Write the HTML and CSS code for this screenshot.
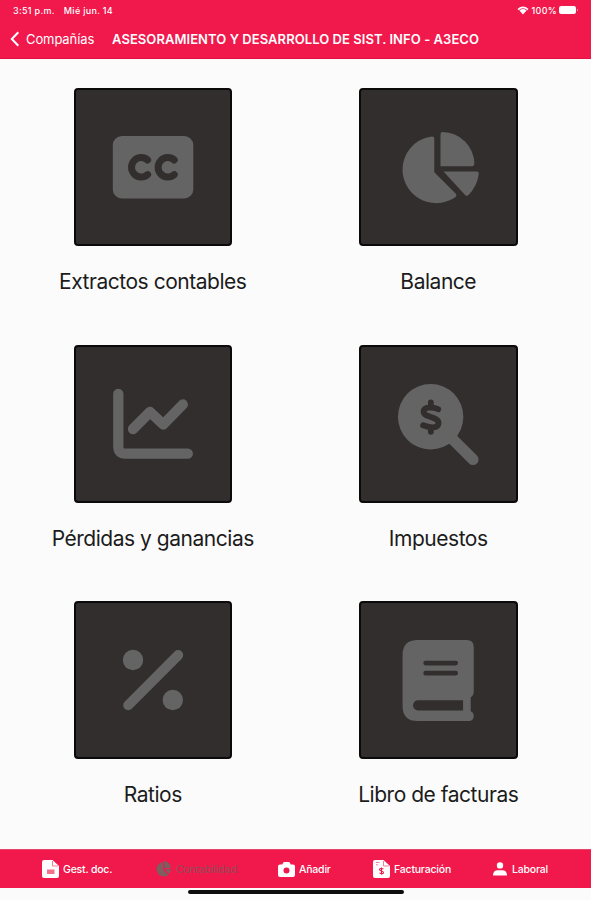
FILE: index.html
```html
<!DOCTYPE html>
<html lang="es">
<head>
    <meta charset="UTF-8">
    <meta name="viewport" content="width=device-width, initial-scale=1.0">
    <title>Contabilidad</title>
    <link rel="stylesheet" href="styles.css">
</head>
<body>
    <header class="header">
        <div class="status-bar">
            <span class="time">3:51 p.m.</span>
            <span class="date">Mié jun. 14</span>
            <svg class="wifi" viewBox="0 0 12 9">
                <path d="M1 3.6Q6-.8 11 3.6" fill="none" stroke="#fff" stroke-width="1.6"/>
                <path d="M2.4 4.4Q6 1.8 9.6 4.4L6 8.6Z" fill="#fff"/>
            </svg>
            <span class="percent">100%</span>
            <svg class="battery" viewBox="0 0 20 8">
                <rect x="0" y="0" width="17" height="8" rx="2.2" fill="#fff"/>
                <path d="M18 2.5q1.4 1.5 0 3z" fill="#fff"/>
            </svg>
        </div>
        <div class="nav-bar">
            <svg class="back-icon" viewBox="0 0 10 16">
                <path d="M8.3 1.2 1.8 8l6.5 6.8" fill="none" stroke="#fff" stroke-width="2"/>
            </svg>
            <a class="back">Compañías</a>
            <h1 class="title">ASESORAMIENTO Y DESARROLLO DE SIST. INFO - A3ECO</h1>
        </div>
    </header>

    <main class="grid">
        <div class="card">
            <div class="tile">
                <svg viewBox="2 2 154 154">
                    <rect class="fill" x="38.8" y="48" width="80.5" height="62.5" rx="9"/>
                    <path class="cut" stroke-width="7" d="M73.6 72a9.7 9.7 0 1 0 0 14.600M100.200 72a9.700 9.700 0 1 0 0 14.600"/>
                </svg>
            </div>
            <p class="label">Extractos contables</p>
        </div>
        <div class="card">
            <div class="tile">
                <svg viewBox="2 2 154 154">
                    <path class="fill" d="M72.5 48.1q2.3-.2 2.3 2v33.6l21.4 21.5q1.6 1.6-.2 3A33.3 33.3 0 1 1 72.5 48.1Z"/>
                    <path class="fill" d="M81 46q0-2.2 2.2-2.2a32 32 0 0 1 31.5 31.5q0 2.4-2.2 2.4H81Z"/>
                    <path class="fill" d="M84 83h33q2.2 0 2 2.2-1.4 12.5-10.5 21.3-1.6 1.4-3.1-.1Z"/>
                </svg>
            </div>
            <p class="label">Balance</p>
        </div>
        <div class="card">
            <div class="tile">
                <svg viewBox="2 2 154 154">
                    <path class="line" stroke-width="10.3" d="M44.3 49v52.5q0 7.2 7.2 7.2h62.3M59 84l17-17 13.3 12.5 19.5-20"/>
                </svg>
            </div>
            <p class="label">Pérdidas y ganancias</p>
        </div>
        <div class="card">
            <div class="tile">
                <svg viewBox="2 2 154 154">
                    <circle class="fill" cx="71.2" cy="71.3" r="32.5"/>
                    <path class="line" stroke-width="11" d="m91 91.5 22.3 22.3"/>
                    <path class="cut" stroke-width="5.8" d="M78.7 63.8c-5-2.2-14.3-2.9-14.5 2.2-.2 6.5 15 4.5 14.8 11.6-.2 5.6-8.8 4.8-15.3 2.2M71.4 57v4M71.4 82v4.3"/>
                </svg>
            </div>
            <p class="label">Impuestos</p>
        </div>
        <div class="card">
            <div class="tile">
                <svg viewBox="2 2 154 154">
                    <circle class="fill" cx="59" cy="59" r="10.2"/>
                    <circle class="fill" cx="98.8" cy="99" r="10.2"/>
                    <path class="line" stroke-width="10" d="m54.2 104.3 50-50.2"/>
                </svg>
            </div>
            <p class="label">Ratios</p>
        </div>
        <div class="card">
            <div class="tile">
                <svg viewBox="2 2 154 154">
                    <path class="fill" d="M58.3 38.7H107q7 0 7 7v44.5q0 3.8-3 5.6v13.8q3 1 3 4.7 0 5-5 5H58.3q-15 0-15-15V53.7q0-15 15-15Z"/>
                    <path class="cut" stroke-width="4.8" d="M66.3 61.7H96M66.3 71.7H96"/>
                    <path class="hole" d="M58.7 98.7h44.7v10H58.7a5 5 0 0 1 0-10Z"/>
                </svg>
            </div>
            <p class="label">Libro de facturas</p>
        </div>
    </main>

    <nav class="tab-bar">
        <a class="tab gest">
            <svg class="doc" viewBox="0 0 17 18">
                <path fill="#fff" d="M2 0h8.5L17 6v10q0 2-2 2H2q-2 0-2-2V2Q0 0 2 0Z"/>
                <path d="M10.5 1v5H16" fill="none" stroke="#f4718c" stroke-width=".9"/>
                <path fill="#f4718c" d="M5 9.5h7.5V14H5z"/>
            </svg>
            <span>Gest. doc.</span>
        </a>
        <a class="tab conta">
            <svg class="pie" viewBox="0 0 15 16">
                <path fill="#7d5f62" d="M7.2 1v7.700l5 5.200A7.200 7.200 0 1 1 7.200 1Z"/>
                <path fill="#7d5f62" d="M8.200 0a6.800 6.800 0 0 1 6.300 7.200H8.200ZM9 8.200h6q-.2 2.900-2.200 4.800Z"/>
            </svg>
            <span>Contabilidad</span>
        </a>
        <a class="tab anadir">
            <svg class="camera" viewBox="0 0 17 15">
                <path fill="#fff" d="M5 1q.4-1 1.5-1h4q1.1 0 1.500 1l.7 1.500H15q2 0 2 2V13q0 2-2 2H2q-2 0-2-2V4.500q0-2 2-2h2.300Z"/>
                <circle cx="8.5" cy="8.5" r="3" fill="#f1184c"/>
            </svg>
            <span>Añadir</span>
        </a>
        <a class="tab factura">
            <svg class="doc" viewBox="0 0 17 18">
                <path fill="#fff" d="M2 0h8.5L17 6v10q0 2-2 2H2q-2 0-2-2V2Q0 0 2 0Z"/>
                <path d="M10.5 1v5H16M3 2.5h3.5M3 4.8h2" fill="none" stroke="#f4718c" stroke-width=".9"/>
                <path d="M10.5 9q-3.8-1.2-4 .6c0 1.8 4.2 1 4 3q-.3 1.8-4 .5M8.5 7.5v7.2" fill="none" stroke="#f1184c" stroke-width="1.1"/>
            </svg>
            <span>Facturación</span>
        </a>
        <a class="tab laboral">
            <svg class="user" viewBox="0 0 14 14">
                <circle cx="7" cy="3.4" r="3.2" fill="#fff"/>
                <path fill="#fff" d="M0 13.5q0-5.2 5-5.2h4q5 0 5 5.2Z"/>
            </svg>
            <span>Laboral</span>
        </a>
    </nav>
    <div class="home-indicator"></div>
</body>
</html>
```

FILE: styles.css
```css
* {
    box-sizing: border-box;
}
body {
    margin: 0;
    height: 900px;
    overflow: hidden;
    background-color: #fbfbfb;
    font-family: Inter, "Liberation Sans", sans-serif;
    display: flex;
    flex-direction: column;
}
svg {
    display: block;
    flex: none;
}
.header {
    height: 59px;
    background-color: #f1184c;
    border-bottom: 1px solid #e0103f;
    color: #fff;
}
.status-bar {
    display: flex;
    align-items: center;
    height: 20px;
    padding: 0 12px 0 13px;
    font-size: 9px;
    font-weight: 500;
    letter-spacing: 0.3px;
    white-space: nowrap;
}
.date {
    margin-left: 9px;
}
.wifi {
    width: 12px;
    height: 9px;
    margin-left: auto;
}
.percent {
    margin: 0 2px 0 3px;
}
.battery {
    width: 20px;
    height: 8px;
}
.nav-bar {
    display: flex;
    align-items: center;
    height: 38px;
    padding-left: 10px;
    white-space: nowrap;
}
.back-icon {
    width: 10px;
    height: 16px;
}
.back {
    margin-left: 6px;
    width: 86px;
    font-size: 13px;
    letter-spacing: -0.1px;
}
.title {
    margin: 0;
    font-size: 13px;
    font-weight: 600;
    letter-spacing: 0.06px;
}
.grid {
    display: grid;
    grid-template-columns: 1fr 1fr;
    grid-auto-rows: 256.5px;
    height: 790px;
    padding: 29px 10px 0;
}
.card {
    display: flex;
    flex-direction: column;
    align-items: center;
}
.tile {
    width: 158px;
    height: 158px;
    border: 2px solid #0b0a0a;
    border-radius: 4px;
    background-color: #322e2d;
}
.card:nth-child(even) .tile {
    width: 159px;
}
.fill {
    fill: #646464;
}
.line {
    fill: none;
    stroke: #646464;
    stroke-linecap: round;
    stroke-linejoin: round;
}
.cut {
    fill: none;
    stroke: #322e2d;
    stroke-linecap: round;
}
.hole {
    fill: #322e2d;
}
.label {
    margin: 21px 0 0;
    color: #1c1c1c;
    font-size: 21px;
    line-height: 30px;
    letter-spacing: -0.47px;
    white-space: nowrap;
}
.tab-bar {
    display: flex;
    align-items: center;
    height: 39px;
    padding-left: 42px;
    background-color: #f1184c;
    border-top: 1px solid #e8436a;
    color: #fff;
}
.tab {
    display: flex;
    align-items: center;
    gap: 4px;
    font-size: 10.5px;
    font-weight: 500;
    letter-spacing: -0.2px;
    white-space: nowrap;
}
.gest {
    width: 114px;
}
.conta {
    width: 122px;
    gap: 5px;
    color: #9f4658;
}
.anadir {
    width: 95px;
}
.factura {
    width: 120px;
}
.laboral {
    gap: 5px;
}
.doc {
    width: 17px;
    height: 18px;
}
.pie {
    width: 15px;
    height: 16px;
}
.camera {
    width: 17px;
    height: 15px;
}
.user {
    width: 14px;
    height: 14px;
}
.home-indicator {
    width: 216px;
    height: 4px;
    margin: 2px auto 0;
    border-radius: 2px;
    background-color: #0c0c0c;
}
```
